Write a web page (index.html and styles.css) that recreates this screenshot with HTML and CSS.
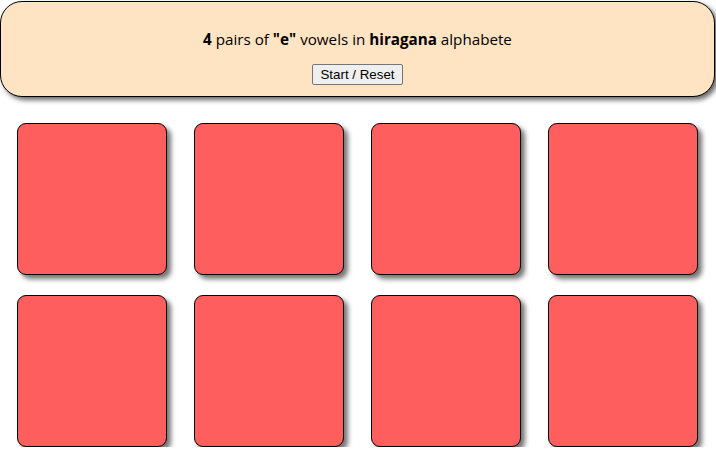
FILE: index.html
```html
<!DOCTYPE html>
<html>
<head>
<meta charset="utf-8">
<link rel="stylesheet" href="styles.css">
</head>
<body>
<header class="panel">
  <p class="title"><b>4</b> pairs of <b>"e"</b> vowels in <b>hiragana</b> alphabete</p>
  <button class="btn">Start / Reset</button>
</header>
<main class="board">
  <div class="card"></div>
  <div class="card"></div>
  <div class="card"></div>
  <div class="card"></div>
  <div class="card"></div>
  <div class="card"></div>
  <div class="card"></div>
  <div class="card"></div>
</main>
</body>
</html>
```
FILE: styles.css
```css
html, body {
  margin: 0;
  padding: 0;
  background: #ffffff;
}
body {
  font-family: "Open Sans", "Noto Sans", sans-serif;
  overflow: hidden;
}
.panel {
  box-sizing: border-box;
  margin: 1px 1px 0 0;
  width: 715px;
  height: 96px;
  background: #ffe4c4;
  border: 1px solid #000;
  border-radius: 22px;
  box-shadow: 3px 3px 5px rgba(0,0,0,0.6);
  display: flex;
  flex-direction: column;
  align-items: center;
  padding-top: 27px;
}
.title {
  margin: 0;
  font-size: 15.2px;
  line-height: 21px;
  color: #000;
}
.title b {
  font-weight: 700;
}
.btn {
  margin-top: 14px;
  font-family: Arial, "Liberation Sans", sans-serif;
  font-size: 13.33px;
  height: 21px;
  padding: 1px 7px;
  background: #efefef;
  border: 1px solid #767676;
  border-radius: 2px;
  color: #000;
}
.board {
  display: grid;
  grid-template-columns: repeat(4, 150px);
  grid-auto-rows: 152px;
  column-gap: 27px;
  row-gap: 20px;
  padding: 26px 0 0 17px;
}
.card {
  background: #ff5e5e;
  border: 1px solid #000;
  border-radius: 9px;
  box-shadow: 4px 4px 5px rgba(0,0,0,0.55);
}
```
